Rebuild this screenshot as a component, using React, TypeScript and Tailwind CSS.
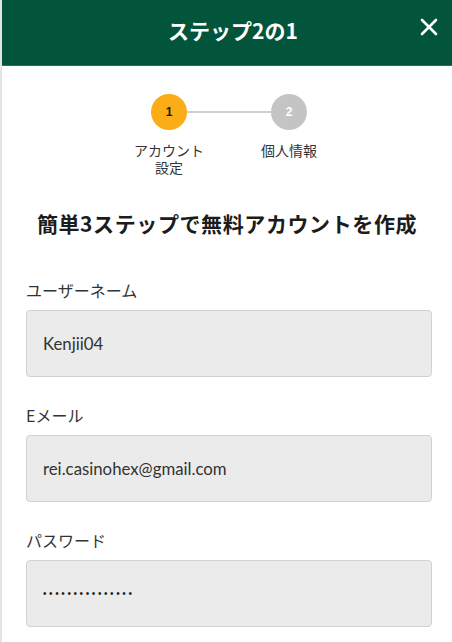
import React from "react";

const jp = { fontFamily: '"Noto Sans CJK JP", "Noto Sans", sans-serif' };

function Field({ label, value, dots }: { label: string; value: string; dots?: boolean }) {
  return (
    <div className="flex flex-col">
      <div className="text-[16px] leading-[24px] text-[#333] pl-[24px]">{label}</div>
      <div className="ml-[24px] mr-[20px] mt-[8px] h-[67px] rounded-[4px] border border-[#d2d2d2] bg-[#ebebeb] flex items-center pl-[16px]">
        {dots ? (
          <span className="text-[10px] tracking-[2.6px] text-[#222] font-['Liberation_Sans',sans-serif]">{value}</span>
        ) : (
          <span className="text-[16.8px] text-[#333] font-['Lato',sans-serif]">{value}</span>
        )}
      </div>
    </div>
  );
}

export default function App() {
  return (
    <div className="w-[452px] h-[642px] overflow-hidden bg-white border-l-2 border-[#e4e4e4]" style={jp}>
      <div className="relative h-[66px] bg-[#02553a] border-b border-[#2f6f57] flex items-center justify-center">
        <div className="text-white font-bold text-[21px] leading-none pl-[12px] -mt-[4px]">ステップ2の1</div>
        <svg className="absolute right-[14px] top-[18px]" width="18" height="18" viewBox="0 0 18 18">
          <path d="M2 2 L16 16 M16 2 L2 16" stroke="white" strokeWidth="2.6" strokeLinecap="round" />
        </svg>
      </div>

      <div className="pl-[4px] mt-[28px] flex flex-col items-center">
        <div className="flex items-center">
          <div className="w-[36px] h-[36px] rounded-full bg-[#fbad18] flex items-center justify-center text-[12px] font-bold text-[#1a1a1a] font-['Liberation_Sans',sans-serif]">1</div>
          <div className="w-[84px] h-[2px] bg-[#cfcfcf]" />
          <div className="w-[36px] h-[36px] rounded-full bg-[#c4c4c4] flex items-center justify-center text-[12px] font-bold text-white font-['Liberation_Sans',sans-serif]">2</div>
        </div>
        <div className="flex mt-[12px]">
          <div className="w-[120px] flex flex-col items-center text-[14px] text-[#333]">
            <span className="leading-[17px]">アカウント</span>
            <span className="leading-[17px]">設定</span>
          </div>
          <div className="w-[120px] text-center text-[14px] leading-[17px] text-[#333]">個人情報</div>
        </div>
      </div>

      <div className="mt-[32px] text-center font-bold text-[21px] leading-[30px] text-[#1c1c1c] tracking-[0.6px]">簡単3ステップで無料アカウントを作成</div>

      <div className="mt-[40px] flex flex-col gap-[26px]">
        <Field label="ユーザーネーム" value="Kenjii04" />
        <Field label="Eメール" value="rei.casinohex@gmail.com" />
        <Field label="パスワード" value="•••••••••••••••" dots />
      </div>
    </div>
  );
}
